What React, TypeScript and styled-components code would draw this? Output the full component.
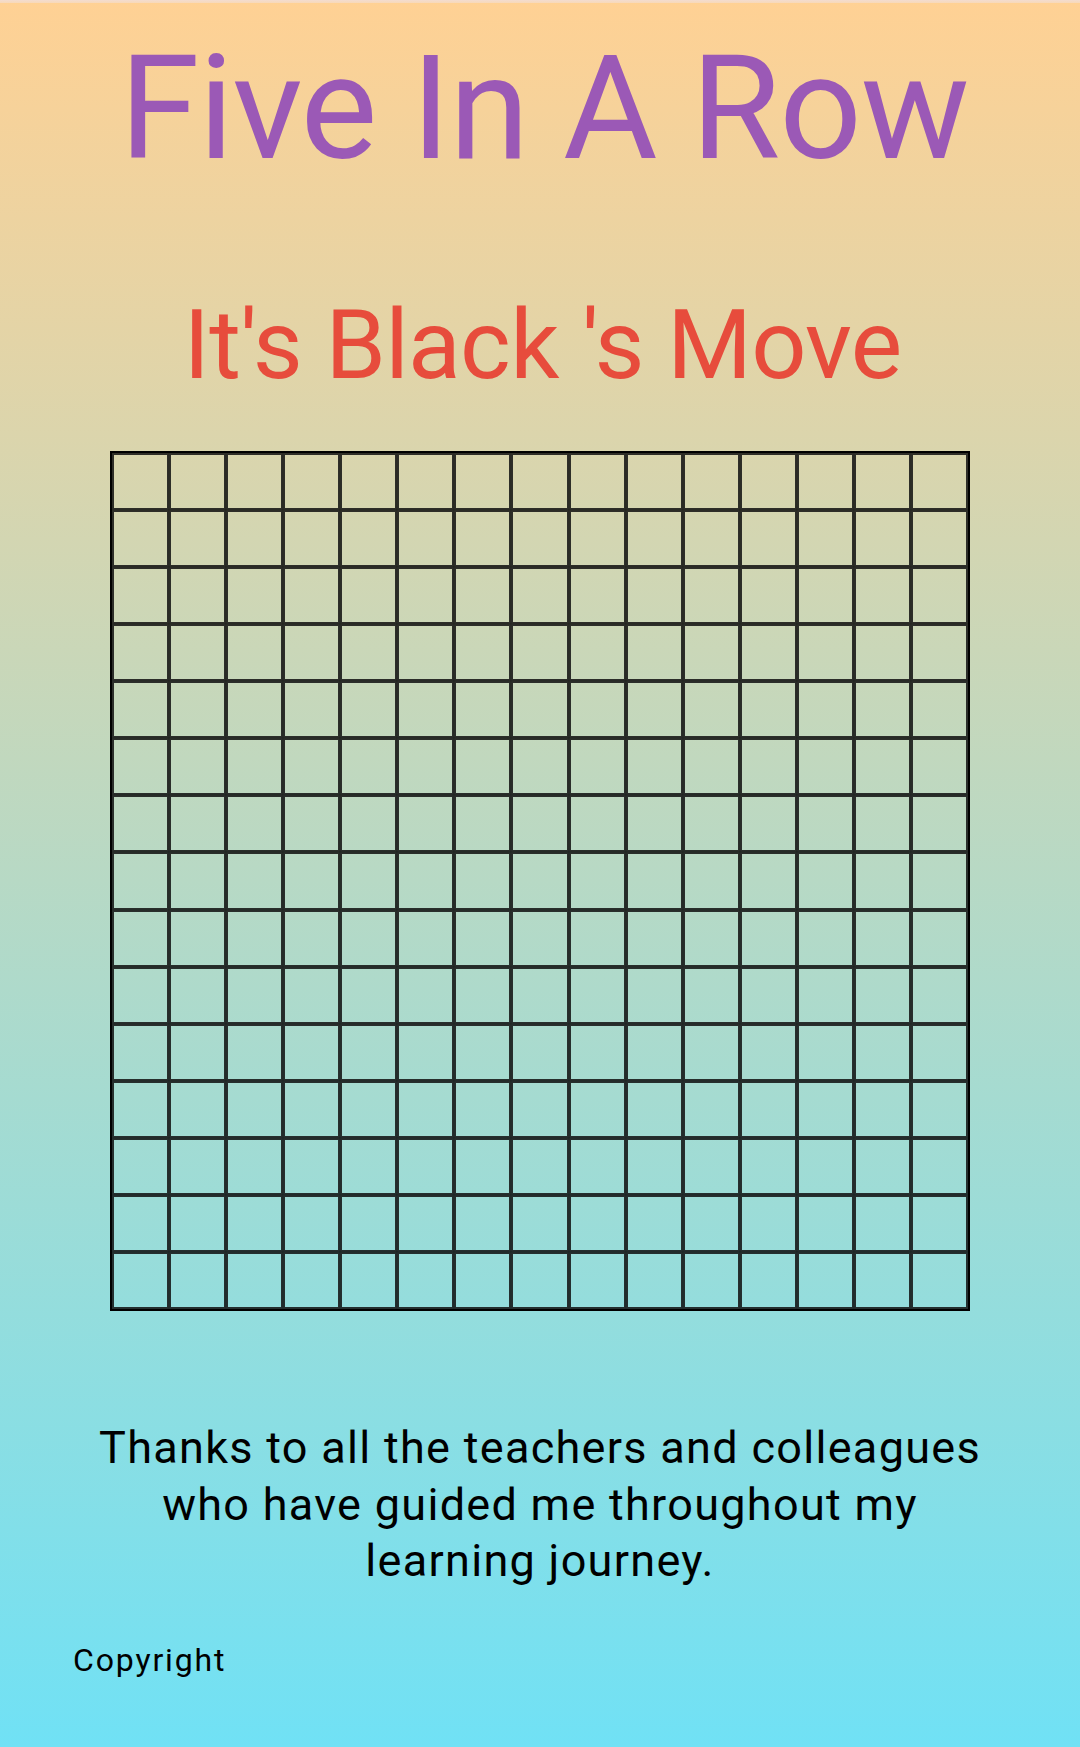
import React from "react";
import styled, { createGlobalStyle } from "styled-components";

const GlobalStyle = createGlobalStyle`
  html, body {
    margin: 0;
    padding: 0;
  }
  body {
    font-family: Roboto, "Noto Sans", "Liberation Sans", sans-serif;
    background: linear-gradient(to bottom, #ffd194 0%, #70e1f5 100%);
    min-height: 1747px;
  }
`;

const Page = styled.div`
  min-height: 1747px;
  display: flex;
  flex-direction: column;
  align-items: center;
  background: linear-gradient(to bottom, #ffd194 0%, #70e1f5 100%);
`;

const TopStrip = styled.div`
  align-self: stretch;
  height: 3px;
  background: linear-gradient(to bottom, #f3dccf, #f8d9b8);
`;

const Title = styled.h1`
  margin: 33px 0 0 8px;
  font-size: 145px;
  font-weight: 400;
  line-height: 1;
  letter-spacing: -1.2px;
  color: #9b59b6;
`;

const Status = styled.h2`
  margin: 116px 0 0 5px;
  font-size: 97px;
  font-weight: 400;
  line-height: 1;
  letter-spacing: -0.7px;
  color: #e74c3c;
`;

const Board = styled.div`
  margin-top: 57px;
  width: 860px;
  height: 860px;
  box-sizing: border-box;
  border: 2px solid #000;
  display: grid;
  grid-template-columns: repeat(15, 1fr);
  grid-template-rows: repeat(15, 1fr);
`;

const Cell = styled.div`
  border: 2px solid rgba(17, 17, 17, 0.85);
  box-shadow: 0 0 1px rgba(0, 0, 0, 0.45);
`;

const Thanks = styled.p`
  margin: 109px 0 0 0;
  width: 900px;
  text-align: center;
  font-size: 45px;
  line-height: 56.5px;
  letter-spacing: 1.3px;
  color: #000;
`;

const Footer = styled.footer`
  align-self: stretch;
  padding: 54px 0 0 73px;
`;

const Copyright = styled.span`
  display: block;
  font-size: 32px;
  line-height: 1;
  letter-spacing: 1.85px;
  color: #000;
`;

export default function App() {
  const cells = Array.from({ length: 15 * 15 }, (_, i) => i);
  return (
    <>
      <GlobalStyle />
      <Page>
        <TopStrip />
        <Title>Five In A Row</Title>
        <Status>It's Black 's Move</Status>
        <Board>
          {cells.map((i) => (
            <Cell key={i} />
          ))}
        </Board>
        <Thanks>
          Thanks to all the teachers and colleagues who have guided me throughout my learning journey.
        </Thanks>
        <Footer>
          <Copyright>Copyright</Copyright>
        </Footer>
      </Page>
    </>
  );
}
